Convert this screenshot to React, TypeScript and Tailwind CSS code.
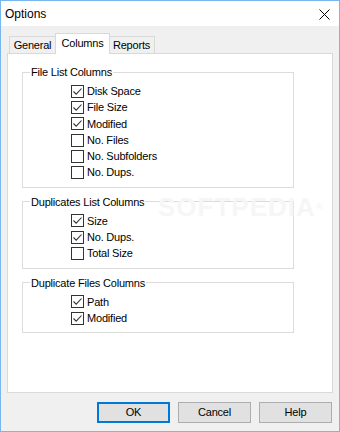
import React from "react";

type Item = { label: string; checked: boolean };

const groups: { title: string; items: Item[] }[] = [
  {
    title: "File List Columns",
    items: [
      { label: "Disk Space", checked: true },
      { label: "File Size", checked: true },
      { label: "Modified", checked: true },
      { label: "No. Files", checked: false },
      { label: "No. Subfolders", checked: false },
      { label: "No. Dups.", checked: false },
    ],
  },
  {
    title: "Duplicates List Columns",
    items: [
      { label: "Size", checked: true },
      { label: "No. Dups.", checked: true },
      { label: "Total Size", checked: false },
    ],
  },
  {
    title: "Duplicate Files Columns",
    items: [
      { label: "Path", checked: true },
      { label: "Modified", checked: true },
    ],
  },
];

const CheckBox = ({ checked }: { checked: boolean }) => (
  <span className="w-[13px] h-[13px] border border-[#333333] bg-white flex items-center justify-center shrink-0">
    {checked && (
      <svg width="11" height="11" viewBox="0 0 11 11" fill="none">
        <path d="M1.5 5.5 L4.2 8.2 L9.5 2.5" stroke="#333333" strokeWidth="1.1" />
      </svg>
    )}
  </span>
);

const Group = ({ title, items }: { title: string; items: Item[] }) => (
  <fieldset className="border border-[#dcdcdc] pb-[6px]">
    <legend className="ml-[7px] px-[1px] leading-[12px]">{title}</legend>
    <div className="flex flex-col pl-[48px] mt-[5px]">
      {items.map((it, i) => (
        <label key={i} className="h-[16.3px] flex items-center gap-[3px]">
          <CheckBox checked={it.checked} />
          <span>{it.label}</span>
        </label>
      ))}
    </div>
  </fieldset>
);

const Button = ({ label, focused }: { label: string; focused?: boolean }) => (
  <button
    className={
      focused
        ? "w-[73px] h-[21px] bg-[#e1e1e1] border-2 border-[#0078d7] text-black"
        : "w-[73px] h-[21px] bg-[#e1e1e1] border border-[#adadad] text-black"
    }
  >
    {label}
  </button>
);

export default function App() {
  return (
    <div
      className="relative w-[340px] h-[432px] flex flex-col bg-[#f0f0f0] border border-[#7ab6ee] text-[11px] tracking-[-0.2px] text-black overflow-hidden"
      style={{ fontFamily: '"Liberation Sans", Arial, sans-serif' }}
    >
      {/* title bar */}
      <div className="h-[25px] bg-white flex items-center justify-between pl-[4px] pr-[9px] shrink-0">
        <span className="text-[12px] tracking-normal">Options</span>
        <svg width="11" height="11" viewBox="0 0 11 11" className="mt-[1px]">
          <path d="M0.5 0.5 L10.5 10.5 M10.5 0.5 L0.5 10.5" stroke="#000" strokeWidth="1" />
        </svg>
      </div>

      <div className="flex flex-col px-[6px] pt-[7px]">
        {/* tabs */}
        <div className="flex items-end h-[20px] pl-[2px]">
          <div className="w-[47px] h-[17px] border border-b-0 border-[#d9d9d9] bg-[#f0f0f0] flex items-center justify-center">
            General
          </div>
          <div className="relative z-10 w-[55px] h-[21px] -mb-px -mx-px border border-b-0 border-[#d9d9d9] bg-white flex items-center justify-center pb-[2px]">
            Columns
          </div>
          <div className="w-[46px] h-[17px] border border-b-0 border-l-0 border-[#d9d9d9] bg-[#f0f0f0] flex items-center justify-center">
            Reports
          </div>
        </div>

        {/* panel */}
        <div className="relative h-[340px] bg-white border border-[#d9d9d9] pl-[14px] pr-[38px] pt-[12px] flex flex-col gap-[8px]">
          {groups.map((g, i) => (
            <Group key={i} title={g.title} items={g.items} />
          ))}
          <span className="absolute left-[150px] top-[140px] text-[26px] leading-[26px] font-bold text-[#f6f6f6] tracking-[1px] select-none">
            SOFTPEDIA<span className="text-[9px] align-top">®</span>
          </span>
        </div>
      </div>

      {/* buttons */}
      <div className="flex justify-end gap-[8px] pr-[7px] mt-[9px]">
        <Button label="OK" focused />
        <Button label="Cancel" />
        <Button label="Help" />
      </div>
    </div>
  );
}
